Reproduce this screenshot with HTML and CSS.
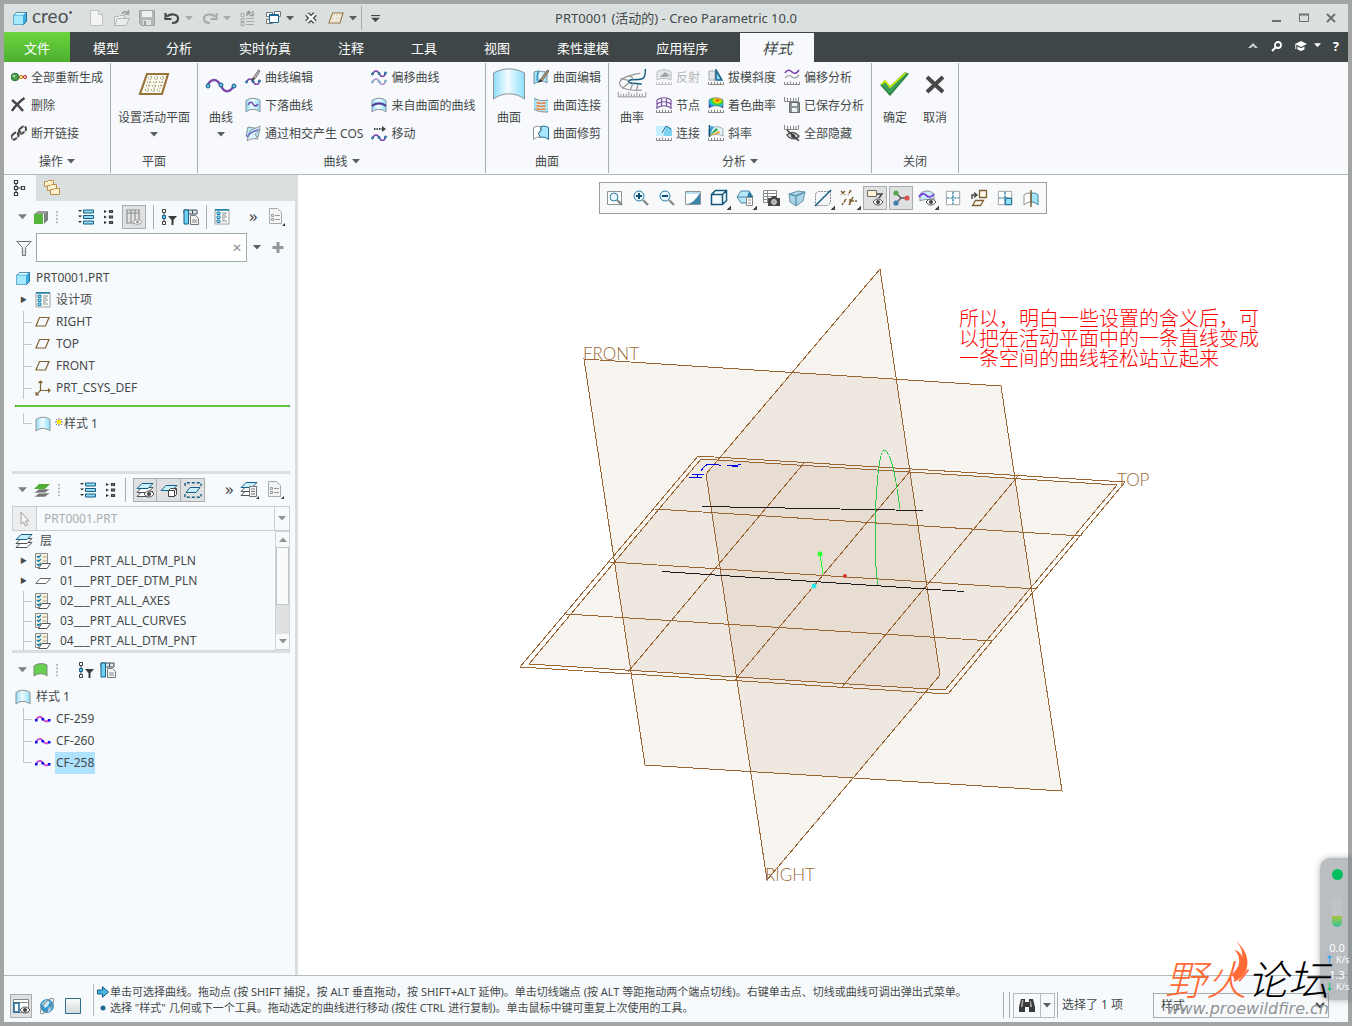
FILE: index.html
```html
<!DOCTYPE html>
<html lang="zh-CN">
<head>
  <meta charset="UTF-8">
  <title>PRT0001 (活动的) - Creo Parametric 10.0</title>
  <meta name="viewport" content="width=device-width, initial-scale=1.0">
  <link rel="stylesheet" href="styles.css">
</head>
<body>
  <!-- icon sprite -->
  <svg class="sprite" aria-hidden="true">
    <defs>
      <linearGradient id="gBlue"><stop offset="0" stop-color="#8fdcf8"/><stop offset=".45" stop-color="#f2fcff"/><stop offset="1" stop-color="#8fe0fb"/></linearGradient>
      <radialGradient id="gHue" cx=".6" cy=".25" r=".8"><stop offset="0" stop-color="#e02020"/><stop offset=".25" stop-color="#ffd800"/><stop offset=".5" stop-color="#2ed52e"/><stop offset=".7" stop-color="#18c8ff"/><stop offset="1" stop-color="#2a30e0"/></radialGradient>
      <linearGradient id="gGray" y2="1" x2="0"><stop offset="0" stop-color="#fdfdfd"/><stop offset="1" stop-color="#d3d8db"/></linearGradient>
      <path id="ruler" d="M.5 13v2.500h15V13M3.500 13v2M6.500 12.500v2.500M9.500 13v2M12.500 13v2" fill="none" stroke="#8a8a8a"/>
    </defs>
    <symbol id="caret" viewBox="0 0 8 5"><path d="M0 0h8L4 4.500z" fill="currentColor"/></symbol>
    <symbol id="cube" viewBox="0 0 16 16"><path d="M1.500 5.500l3-3h10v9l-3 3h-10z" fill="#37aede" stroke="#27719c"/><path d="M1.500 5.500h9.500v9H1.500z" fill="#a6e9ff"/><path d="M2.500 4.800l2-2h9l-2 2z" fill="#dff7ff"/></symbol>
    <symbol id="newdoc" viewBox="0 0 16 16"><path d="M1.500.5h8l4 4v11h-12z" fill="#f4f4f4" stroke="#c0c2c2"/><path d="M9.500.5v4h4" fill="none" stroke="#c0c2c2"/></symbol>
    <symbol id="open" viewBox="0 0 16 16"><path d="M.5 15V6.500h4l1-1h5v3M.500 15.500l3-7h12l-4 7z" fill="#eceeee" stroke="#b4b6b6"/><path d="M8 4c1-3 4-2.500 6-1.500M14.500 0v4h-4" fill="none" stroke="#9a9c9c" stroke-width="1.500"/></symbol>
    <symbol id="save" viewBox="0 0 16 16"><path d="M.5.5h15v15h-13l-2-2z" fill="#b5b8b8" stroke="#a0a3a3"/><path d="M3 1h10v6H3z" fill="#f0f1f1"/><path d="M4 10h8v5H4z" fill="#dfe1e1"/><path d="M5 11h2v4H5z" fill="#9b9e9e"/></symbol>
    <symbol id="undo" viewBox="0 0 16 16"><path d="M3 6.500C7 3 14 4 14 8.500S9 13 8 13M1.500 3v6h6" fill="none" stroke="currentColor" stroke-width="2.200"/></symbol>
    <symbol id="regen" viewBox="0 0 16 16"><path d="M1 3.500h3v3H1zM1 8.500h3v3H1zM1 12.500h3v3H1zM6 8.500h8M6 11.500h8M6 14.500h8" fill="none" stroke="#a4a8a8"/><path d="M7 6V2.500h3M13 1v4.500H9.500M8 .8l2.500 1.700L8 4.500" fill="none" stroke="#999c9c" stroke-width="1.400"/></symbol>
    <symbol id="windows" viewBox="0 0 16 16"><path d="M1.500 2.500h6v4h-6zM1.500 9.500h6v4h-6zM9.500 1.500h6v5h-6z" fill="#fff" stroke="#777"/><path d="M4.500 4.500h9v8h-9z" fill="#fff" stroke="#1c6a95"/><path d="M4 4h10v2H4z" fill="#1c6a95"/></symbol>
    <symbol id="closewin" viewBox="0 0 16 16"><path d="M4 4l8 8M12 4l-8 8" stroke="#4a4a4a" stroke-width="5"/><path d="M4 4l8 8M12 4l-8 8" stroke="#fff" stroke-width="2.400"/></symbol>
    <symbol id="plane" viewBox="0 0 32 24"><path d="M9 2h21l-6 20H2z" fill="#fdfaf0" stroke="#98733a" stroke-width="2.200"/><path d="M10 6h16M9 10h16M8 14h16M7 18h15" stroke="#7a6a3e" stroke-dasharray="1 2"/><path d="M13 4L9 20M19 4l-4 16M25 4l-4 16" stroke="#7a6a3e" stroke-dasharray="1 2"/></symbol>
    <symbol id="eq" viewBox="0 0 10 8"><path d="M0 .5h10" stroke="#444" stroke-width="1.500"/><path d="M0 3h10L5 8z" fill="#444"/></symbol>

    <symbol id="regenall" viewBox="0 0 16 16"><circle cx="4" cy="8" r="3.800" fill="#4f9e50" stroke="#2b6c33"/><circle cx="3" cy="7" r="1.300" fill="#a9dca6"/><circle cx="10" cy="8" r="1.700" fill="#ffe28a" stroke="#b8862f"/><circle cx="14" cy="8" r="1.600" fill="#ffd0d0" stroke="#c03030"/></symbol>
    <symbol id="del" viewBox="0 0 16 16"><path d="M1 3c4 3 8 7 11 11M13.500 1C8 5 4 9 1 14" fill="none" stroke="#454545" stroke-width="2.400"/></symbol>
    <symbol id="unlink" viewBox="0 0 16 16"><rect x="0" y="8.500" width="8" height="5" rx="2.500" transform="rotate(-45 4 11)" fill="none" stroke="#4d4d4d" stroke-width="2" stroke-dasharray="5 1"/><rect x="7.500" y="2.500" width="8" height="5" rx="2.500" transform="rotate(-45 11.500 5)" fill="none" stroke="#4d4d4d" stroke-width="2" stroke-dasharray="5 1"/><path d="M6 10l4-4" stroke="#4d4d4d" stroke-width="1.400"/></symbol>
    <symbol id="curvebig" viewBox="0 0 32 32"><path d="M2 18c4-8 10-8 14 0s10 6 13-1" fill="none" stroke="#7a4bab" stroke-width="2.400"/><g fill="#5cc6ee" stroke="#175f84"><circle cx="3" cy="18" r="2"/><circle cx="16" cy="17" r="2"/><circle cx="29" cy="18" r="2"/></g></symbol>
    <symbol id="wave" viewBox="0 0 16 8"><path d="M1.500 5c2-4 5-4 7 0s5 3 6-1" fill="none" stroke="#7b45b0" stroke-width="1.600"/><g fill="#5cc6ee" stroke="#175f84"><circle cx="1.500" cy="5" r="1"/><circle cx="8" cy="4.500" r="1"/><circle cx="14.500" cy="4" r="1"/></g></symbol>
    <symbol id="cedit" viewBox="0 0 16 16"><use href="#wave" y="8" width="16" height="8"/><path d="M8 9l5.500-8 1.500 1-5 8z" fill="#c9c2b8" stroke="#555" stroke-width=".8"/><path d="M6 12l2-3.500 2 1.500z" fill="#333"/></symbol>
    <symbol id="surf" viewBox="0 0 16 16"><path d="M1 3.500C5 .5 11 .5 15 3.500V15c-4-3.500-10-3.500-14 0z" fill="url(#gBlue)" stroke="#8b9296"/></symbol>
    <symbol id="cdrop" viewBox="0 0 16 16"><use href="#surf"/><path d="M3 8c2-4 4-3 5-1s3 3 5 0" fill="none" stroke="#6f45a8" stroke-width="1.600"/></symbol>
    <symbol id="cos" viewBox="0 0 16 16"><path d="M3 2l12 2-2 8-12-1z" fill="#bdeafb" stroke="#7d8f98"/><path d="M5 6c4-3 7-3 10-5-1 5-3 7-5 8l3 5c-4-1-8 0-11 2z" fill="#d8f2fd" stroke="#8b9296"/><path d="M2 12c3-5 7-6 11-7" fill="none" stroke="#6f6ac8" stroke-width="1.500"/></symbol>
    <symbol id="coff" viewBox="0 0 16 16"><use href="#wave" width="16" height="8"/><g opacity=".55"><use href="#wave" y="8" width="16" height="8"/></g></symbol>
    <symbol id="cfrom" viewBox="0 0 16 16"><use href="#surf"/><path d="M1 9c4-3.500 10-3.500 14 0" fill="none" stroke="#4c3a94" stroke-width="2.200"/></symbol>
    <symbol id="cmove" viewBox="0 0 16 16"><use href="#wave" y="8" width="16" height="8"/><path d="M3 4h9" stroke="#444" stroke-width="2" stroke-dasharray="1.500 1"/><path d="M11 1l4 3-4 3z" fill="#444"/></symbol>
    <symbol id="surfbig" viewBox="0 0 32 32"><path d="M.5 5C10-.5 22-.5 31.500 5v26C22 24 10 24 .5 31z" fill="url(#gBlue)" stroke="#8b9296"/></symbol>
    <symbol id="sedit" viewBox="0 0 16 16"><path d="M1 3c5-2 8 0 13 0v11c-4-3-9-2-13 1z" fill="url(#gBlue)" stroke="#7b929c"/><path d="M6 2C4 5 4 9 5 13" fill="none" stroke="#3d9dcc" stroke-width="2"/><path d="M7 11l7.500-10L16 2 9 12z" fill="#c99f72" stroke="#4a4a4a" stroke-width=".8"/><path d="M5 14l2-4 2.500 2z" fill="#333"/></symbol>
    <symbol id="sconn" viewBox="0 0 16 16"><path d="M1 1c4 3 9 3 14 2v12c-5 0-10 1-14-3z" fill="url(#gBlue)"/><path d="M1 1c4 3 9 3 14 2M1 12c4 3 9 3 14 3" fill="none" stroke="#7d8489"/><path d="M3.500 5.500l4 1 5-.500M3.500 8.500l4 1 5-.500M3.500 11.500l4 1 5-.500" fill="none" stroke="#ee7625" stroke-width="1.400"/><path d="M8 3v11" stroke="#a3bfca" stroke-width="1"/></symbol>
    <symbol id="strim" viewBox="0 0 16 16"><path d="M.5 2.500c4-2 5-1 7-1v4l-2 3 2 4c-3-1-5 0-7 2z" fill="#fff" stroke="#8b9296"/><path d="M8 1.500c3-1 5 0 7.500 1v12c-2-2-5-3-8-2l-2-4 2.500-3z" fill="#a9e6fb" stroke="#23708f"/></symbol>
    <symbol id="curvature" viewBox="0 0 32 36"><path d="M31 1c0 9-1 12-8 12-7 0-10 0-11 2 0 3 6 2 15 3" fill="none" stroke="#145a80" stroke-width="1.600"/><path d="M25 6C16 7 2 11 2 17c0 6 10 9 25 8M12 14L3 12M13 16L5 23M17 17l-3 8M23 18l-2 7M17 13l-2-5" fill="none" stroke="#999" stroke-width="1.400"/><path d="M.5 27v5.500h31V27M3.500 29v3M6.500 29v3M9.500 29v3M12.500 27v5M15.500 29v3M18.500 29v3M21.500 27v5M24.500 29v3M27.500 29v3" fill="none" stroke="#8a8a8a"/></symbol>
    <symbol id="reflect" viewBox="0 0 16 16"><path d="M1 3c4-3 10-3 14 0v8c-4-2-10-2-14 0z" fill="#e4e6e7" stroke="#b9bcbd"/><path d="M4 8l5-5 5 4-6 1z" fill="#9ea1a3"/><use href="#ruler" opacity=".5"/></symbol>
    <symbol id="knot" viewBox="0 0 16 16"><path d="M1 3c4-3 10-3 14 0M1 7c4-3 10-3 14 0M1 11c4-3 10-3 14 0M1 3v9M15 3v9M5.500 1v9M10.500 1v9" fill="none" stroke="#7b4fa0" stroke-width="1.200"/><use href="#ruler"/></symbol>
    <symbol id="conn" viewBox="0 0 16 16"><path d="M0 1h10L7 9l-1 2H0z" fill="#c5effc"/><path d="M10 1l6 3v7H7z" fill="#7ed1f0"/><path d="M10 1L6 8M10 1l5 3" fill="none" stroke="#266f94"/><use href="#ruler"/></symbol>
    <symbol id="draft" viewBox="0 0 16 16"><path d="M1 2h6v9H1z" fill="#e4e7e8" stroke="#a6aaac"/><path d="M8 1l6 10H8z" fill="#8bd8f4" stroke="#176188" stroke-width="1.500"/><use href="#ruler"/></symbol>
    <symbol id="shade" viewBox="0 0 16 16"><path d="M1 3c4-3 10-3 14 0v8c-4-3-10-3-14 0z" fill="url(#gHue)" stroke="#555" stroke-width=".6"/><use href="#ruler"/></symbol>
    <symbol id="slope" viewBox="0 0 16 16"><path d="M1 4c5-3 10-3 14 0v7c-4-2-9-2-14 0z" fill="#e0f3fa" stroke="#a6aaac"/><path d="M1 11L3 1l3 1z" fill="#37a0d8"/><path d="M1 11l7-8 2 2z" fill="#2ba84a"/><path d="M1 11l10-5 1 2z" fill="#e8a020"/><path d="M1.500 0v12" fill="none" stroke="#145a80" stroke-width="1.600"/><use href="#ruler"/></symbol>
    <symbol id="offana" viewBox="0 0 16 16"><path d="M1 4c3-5 6-2 7-1s4 3 7-2" fill="none" stroke="#7b45b0" stroke-width="1.600"/><path d="M1 9c3-4 6-2 7-1s4 2 7-2" fill="none" stroke="#a0a3a5" stroke-width="1.300"/><use href="#ruler"/></symbol>
    <symbol id="saved" viewBox="0 0 16 16"><path d="M.5 0v4.500h14V0M3.500 1v3M6.500 1v3M9.500 1v3M12 1v3" fill="none" stroke="#888"/><path d="M5.500 5.500h10v10h-10z" fill="#8e9396" stroke="#66696b"/><path d="M8 6h5v3H8zM8 11h5v4H8z" fill="#e9f2f5"/></symbol>
    <symbol id="hideall" viewBox="0 0 16 16"><path d="M.5 0v4.500h14V0M3.500 1v3M6.500 1v3M9.500 1v3M12 1v3" fill="none" stroke="#888"/><path d="M3 10c3-4 9-3 12 1-3 4-9 4-12-1z" fill="#cfcfcf" stroke="#555" stroke-width="1.400"/><circle cx="9" cy="11" r="2" fill="#444"/><path d="M3 5l12 11" stroke="#333" stroke-width="1.400"/></symbol>
    <symbol id="ok" viewBox="0 0 32 32"><path d="M2 17l4-4 5 6L26 5l3 1-18 21z" fill="#3aa05c" stroke="#2b7d3a" stroke-width="1.200"/><path d="M2.500 16.500L6 13l5 6L26.500 5" fill="none" stroke="#d2f000" stroke-width="1.600"/></symbol>
    <symbol id="cancel" viewBox="0 0 32 32"><path d="M8 9l16 15M24 9L8 24" stroke="#484848" stroke-width="4"/></symbol>

    <symbol id="treeicon" viewBox="0 0 16 16"><path d="M2.500.5h3v3h-3zM2.500 6.500h3v3h-3zM2.500 12.500h3v3h-3zM9.500 6.500h3v3h-3zM4 4v2M4 10v2M6 8h3" fill="#fff" stroke="#3c3c3c" stroke-width="1.200"/></symbol>
    <symbol id="folders" viewBox="0 0 16 16"><g fill="#fdf0d0" stroke="#c09048"><path d="M.5 1.500h3l1-1h5v6h-9z"/><path d="M3.500 5.500h3l1-1h5v6h-9z"/><path d="M6.500 9.500h3l1-1h5v6h-9z"/></g></symbol>
    <symbol id="green" viewBox="0 0 16 16"><path d="M1 5h9v10H1z" fill="#57b53c"/><path d="M1 5l4-3h10l-4 3z" fill="#9a9c9c"/><path d="M11 5l4-3v9l-4 4z" fill="#7c7f7f"/></symbol>
    <symbol id="dots" viewBox="0 0 4 16"><path d="M2 1v15" stroke="#8d9090" stroke-width="1.400" stroke-dasharray="2 2"/></symbol>
    <symbol id="expand" viewBox="0 0 16 16"><path d="M0 1h4L2 3zM0 6.500h4l-2 2zM0 12h4l-2 2z" fill="#333"/><path d="M5.500 1h10v3h-10zM5.500 6.500h10v3h-10zM5.500 12h10v3h-10z" fill="#8fdaf5" stroke="#175f84"/></symbol>
    <symbol id="collapse" viewBox="0 0 16 16"><path d="M4 1l3 1.500L4 4zM4 6.500L7 8 4 9.500zM4 12l3 1.500L4 15z" fill="#333"/><path d="M9.500 1.500h3v2h-3zM9.500 7h3v2h-3zM9.500 12.500h3v2h-3z" fill="#777" stroke="#3c3c3c" stroke-width="1.200"/></symbol>
    <symbol id="colseye" viewBox="0 0 16 16"><path d="M1 1h12v13H1zM1 4h12M5 1v13M9 1v10" fill="#e4e5e6" stroke="#8b8e8f" stroke-width="1.200"/><ellipse cx="11.500" cy="13" rx="4" ry="2.300" fill="#fff" stroke="#999"/><circle cx="11.500" cy="13" r="1.300" fill="#888"/></symbol>
    <symbol id="treefilter" viewBox="0 0 16 16"><path d="M1.500.5h3v3h-3zM1.500 12.500h3v3h-3zM3 4v8" fill="#fff" stroke="#3c3c3c"/><path d="M1.500 6.500h3v3h-3z" fill="#5ac8ee" stroke="#175f84"/><path d="M7 7h9l-3.500 4v5h-2v-5z" fill="#3c3c3c"/></symbol>
    <symbol id="cols" viewBox="0 0 16 16"><path d="M1 1h13v4H1z" fill="#dfe3e5" stroke="#3c5560"/><path d="M1 1h4.500v14H1z" fill="#6fd0f2" stroke="#175f84"/><path d="M9.500 1v4" stroke="#3c5560"/><path d="M7.500 6.500h5l3 3v6h-8z" fill="#f5f5f5" stroke="#777"/><path d="M9 11h5M9 13h5" stroke="#888"/></symbol>
    <symbol id="items" viewBox="0 0 16 16"><path d="M1 1h14v14H1z" fill="#fff" stroke="#9a9d9e"/><path d="M1 .8h14" stroke="#1f83ab" stroke-width="1.600"/><path d="M3 3h3v2.500H3zM3 7h3v2.500H3zM3 11h3v2.500H3z" fill="#9fdcf2" stroke="#1f83ab"/><path d="M8 4h5M8 6h4M8 8h5M8 10h3M8 12h5" stroke="#8a8d8e"/></symbol>
    <symbol id="doc" viewBox="0 0 18 20"><path d="M1.500 1.500h8l4 4v11h-12z" fill="#f3f4f5" stroke="#a8abac"/><path d="M3.500 7.500h2v2h-2zM3.500 11.500h2v2h-2zM7 8.500h5M7 12.500h5" fill="none" stroke="#999"/><path d="M17 16v3h-3z" fill="#333"/></symbol>
    <symbol id="funnel" viewBox="0 0 16 16"><path d="M.8 1.500h14.400l-5.600 6v8H6.400v-8z" fill="url(#gGray)" stroke="#6e7172"/></symbol>
    <symbol id="planesm" viewBox="0 0 16 16"><path d="M4.500 3.500H14L10.500 12H1z" fill="none" stroke="#7e6232" stroke-width="1.200"/></symbol>
    <symbol id="csys" viewBox="0 0 16 16"><path d="M5.500 1v9.500H15M5.500 10.500L1 15M3.500 3l2-2 2 2M13 8.500l2 2-2 2M1 12v3h3" fill="none" stroke="#7e6232" stroke-width="1.200"/></symbol>
    <symbol id="star" viewBox="0 0 8 8"><path d="M4 0v8M0 4h8M1 1l6 6M7 1L1 7" stroke="#555" stroke-width=".8"/><path d="M2 2h4v4H2z" fill="#ffee00"/></symbol>
    <symbol id="layergreen" viewBox="0 0 18 16"><path d="M6 11h11l-5 4H1zM6 7h11l-5 4H1z" fill="#777" stroke="#fff" stroke-width=".5"/><path d="M6 2h11l-5 5H1z" fill="#4fae35"/></symbol>
    <symbol id="layers" viewBox="0 0 18 16"><g fill="#fff" stroke="#4d5254"><path d="M6 9.500h11l-5 5H1z"/><path d="M6 5.500h11l-5 5H1z"/></g><path d="M6 1.500h11l-5 5H1z" fill="#c8effc" stroke="#175f84"/></symbol>
    <symbol id="eye" viewBox="0 0 10 8"><path d="M0 4c3-4 7-4 10 0-3 4-7 4-10 0z" fill="#fff" stroke="#444"/><circle cx="5" cy="4" r="2" fill="#444"/></symbol>
    <symbol id="layereye" viewBox="0 0 18 16"><use href="#layers"/><use href="#eye" x="8" y="8" width="10" height="8"/></symbol>
    <symbol id="layercube" viewBox="0 0 18 16"><path d="M6 3.500h11l-5 5H1z" fill="#c8effc" stroke="#175f84"/><path d="M8.500 8.500l2-2h6v6l-2 2h-6zM8.500 8.500h6v6M14.500 8.500l2-2" fill="#fff" stroke="#444"/></symbol>
    <symbol id="layersel" viewBox="0 0 18 16"><path d="M1 4V.8h16V4M1 12v3.200h16V12" fill="none" stroke="#175f84" stroke-dasharray="3 2" stroke-width="1.400"/><path d="M6 5.500h10l-4 5H2z" fill="#c8effc" stroke="#175f84"/></symbol>
    <symbol id="layerdoc" viewBox="0 0 20 20"><g fill="#fff" stroke="#4d5254"><path d="M6 10.500h11l-5 5H1z"/><path d="M6 6.500h11l-5 5H1z"/></g><path d="M6 2.500h11l-5 5H1z" fill="#c8effc" stroke="#175f84"/><path d="M9.500 6.500h7v10h-7z" fill="#f4f4f4" stroke="#777"/><path d="M11 9h4M11 11.500h4M11 14h4" stroke="#777"/><path d="M19 16v3h-3z" fill="#333"/></symbol>
    <symbol id="layeritem" viewBox="0 0 16 16"><path d="M.5.5h12v14H.5z" fill="#fdf3dc" stroke="#8a8d8e"/><path d="M2 3l1.500 1.500L6 2M2 7l1.500 1.500L6 6M2 11l1.500 1.500L6 10" fill="none" stroke="#0e7fb5" stroke-width="1.400"/><path d="M7.500 4h4M7.500 8h4" stroke="#999"/><path d="M7 10.500h8.500L12 15.500H3.500z" fill="#fff" stroke="#555"/></symbol>
    <symbol id="layerplane" viewBox="0 0 16 16"><path d="M5 5.500h10.500L11 10.500H.8z" fill="#fff" stroke="#666"/></symbol>
    <symbol id="cursor" viewBox="0 0 16 16"><path d="M4 1l8 9H8.500l2 4-2 1-2-4L4 13z" fill="#f4f4f4" stroke="#a0a3a4"/></symbol>
    <symbol id="surfgreen" viewBox="0 0 16 16"><path d="M1 4c4-3 9-3 13-1v11c-3-3-9-3-13 0z" fill="#66cf4d" stroke="#7c8a7c"/></symbol>
    <symbol id="cf" viewBox="0 0 16 16"><path d="M1 9c2-4 5-4 7-1s4 3 6 1" fill="none" stroke="#c84ad0" stroke-width="2"/><path d="M0 8h2.500v2.500H0zM6.500 7H9v2.500H6.500zM13 8h2.500v2.500H13z" fill="#0c0ce8"/></symbol>

    <symbol id="zoomfit" viewBox="0 0 18 18"><path d="M1.500 2.500h14v13h-14z" fill="#fff" stroke="#909394"/><circle cx="8" cy="8" r="4" fill="#e8f8ff" stroke="#2d7da0"/><path d="M11 11l5 5" stroke="#8a8d8e" stroke-width="2.400"/></symbol>
    <symbol id="zoomin" viewBox="0 0 18 18"><circle cx="7" cy="7" r="5" fill="#e8f8ff" stroke="#2d7da0"/><path d="M4 7h6M7 4v6" stroke="#134d70" stroke-width="2"/><path d="M11 11l5 5" stroke="#8a8d8e" stroke-width="2.400"/></symbol>
    <symbol id="zoomout" viewBox="0 0 18 18"><circle cx="7" cy="7" r="5" fill="#e8f8ff" stroke="#2d7da0"/><path d="M4 7h6" stroke="#134d70" stroke-width="2"/><path d="M11 11l5 5" stroke="#8a8d8e" stroke-width="2.400"/></symbol>
    <symbol id="repaint" viewBox="0 0 18 18"><path d="M1.500 2.500h15v13h-15z" fill="#fff" stroke="#909394"/><path d="M2 15c6 0 9-4 14-11v11z" fill="#3987ab"/><path d="M2 3h14v2H2z" fill="#b8dfee"/></symbol>
    <symbol id="style3d" viewBox="0 0 18 18"><path d="M1.500 5.500l4-4h11v10l-4 4h-11zM1.500 5.500h11v10M12.500 5.500l4-4" fill="#f6fdff" stroke="#15577c" stroke-width="1.500"/></symbol>
    <symbol id="orient" viewBox="0 0 18 18"><path d="M1 8l4-6h8l4 6-4 6H5zM1 8h16" fill="#b9e8f8" stroke="#4a88a4"/><path d="M13 2l4 6-1 4-5-3z" fill="#2a7ca2"/><path d="M10.500 8.500h6v8h-6zM12 11h3M12 14h3" fill="#fff" stroke="#888"/></symbol>
    <symbol id="camera" viewBox="0 0 18 18"><path d="M1.500 1.500h13v12h-13zM1.500 4.500h13M1.500 7.500h13M1.500 10.500h7M5.500 1.500v12" fill="#fff" stroke="#8a8d8e"/><path d="M6 9h3l1-2h4l1 2h3v8H6z" fill="#484848"/><circle cx="12" cy="13" r="2.400" fill="#aaa" stroke="#ddd"/></symbol>
    <symbol id="persp" viewBox="0 0 18 18"><path d="M1 5l9-3 7 1-2 9-7 5-6-4z" fill="#a8d5e7" stroke="#7295a5"/><path d="M1 5l7 2 9-4M8 7v10" fill="none" stroke="#5b94af" stroke-width="1.400"/></symbol>
    <symbol id="section" viewBox="0 0 18 18"><path d="M1.500 4.500l3-2h12v11l-3 3h-12z" fill="#f3f6f7" stroke="#8a8d8e" stroke-dasharray="2 1"/><path d="M1 17L17 1" stroke="#155c82" stroke-width="1.500"/></symbol>
    <symbol id="datum" viewBox="0 0 18 18"><path d="M1 2l4 4M5 2L1 6M11 1L8 6M6 10l-4 6M10 10v6M10 12h7M13 8l-4 8" stroke="#7e6232" stroke-width="1.500" stroke-dasharray="4 1"/></symbol>
    <symbol id="annot" viewBox="0 0 18 18"><path d="M1.500 1.500h9v6h-9z" fill="#fff6da" stroke="#6d6d6d"/><path d="M11 5h5l-3 4" fill="none" stroke="#444" stroke-width="1.400"/><use href="#eye" x="7" y="9" width="10" height="8"/></symbol>
    <symbol id="spin" viewBox="0 0 18 18"><path d="M4 4l5 5 6 0M9 9l-5 5" fill="none" stroke="#555" stroke-width="1.400"/><circle cx="4" cy="4" r="2.600" fill="#56a552"/><circle cx="15" cy="9" r="2.600" fill="#d85350"/><circle cx="4" cy="14" r="2.600" fill="#3781b0"/></symbol>
    <symbol id="styeye" viewBox="0 0 18 18"><path d="M2 5c4-4 10-4 14 0v7c-4-2-10-2-14 0z" fill="#c9eefb" stroke="#8b9296"/><path d="M1 8c4-6 7-2 8-1s4 2 7-2" fill="none" stroke="#7b45e0" stroke-width="1.800"/><use href="#eye" x="8" y="9" width="10" height="8"/></symbol>
    <symbol id="grid4" viewBox="0 0 18 18"><path d="M1.500 1.500h15v15h-15z" fill="#fff" stroke="#999"/><path d="M9 2v14M2 9h14" stroke="#1b7299" stroke-width="1.400" stroke-dasharray="3 1"/></symbol>
    <symbol id="rot" viewBox="0 0 18 18"><path d="M9.500 1.500h7v7h-7zM5.500 11.500h8l-3 5h-8z" fill="#fffaf0" stroke="#7e6232" stroke-width="1.300"/><path d="M2 10V6h4M4 3.500L7 6 4 8.500" fill="none" stroke="#444" stroke-width="1.400"/></symbol>
    <symbol id="grid1" viewBox="0 0 18 18"><path d="M1.500 1.500h15v15h-15z" fill="#fff" stroke="#999"/><path d="M9 2v14M2 9h14" stroke="#1b7299" stroke-width="1.400" stroke-dasharray="3 1"/><path d="M9.500 9.500h7v7h-7z" fill="#8fe0fb" stroke="#15577c"/></symbol>
    <symbol id="mirror" viewBox="0 0 18 18"><path d="M9 4c-3 0-5 0-7 2v10c2-2 4-3 7-3z" fill="#fff" stroke="#8b9296"/><path d="M9 4c3 0 5 0 7 2v10c-2-2-4-3-7-3z" fill="#a4e4fa" stroke="#3f86a5"/><path d="M9 1v17" stroke="#7e6232" stroke-width="1.500"/></symbol>

    <symbol id="navpane" viewBox="0 0 18 18"><path d="M1.500 2.500h15v13h-15zM1.500 5.500h15" fill="#fff" stroke="#888"/><path d="M2 6h5v9H2z" fill="#fff" stroke="#1c6a95" stroke-width="1.500"/><use href="#eye" x="8" y="9" width="10" height="8"/></symbol>
    <symbol id="globe" viewBox="0 0 18 18"><circle cx="9" cy="9" r="6.500" fill="#2e97cf" stroke="#5d9cc0"/><path d="M4 7l4-4 4 2-2 4-3 2zM10 11l4-2-2 5-2 1z" fill="#c6eaf9"/><ellipse cx="9" cy="9" rx="9.500" ry="3.500" transform="rotate(-50 9 9)" fill="none" stroke="#888"/></symbol>
    <symbol id="pane" viewBox="0 0 18 18"><path d="M1.500 1.500h15v15h-15z" fill="url(#gGray)" stroke="#2f6f92"/></symbol>
    <symbol id="bino" viewBox="0 0 18 18"><path d="M3 3h4v3h4V3h4l2 8v5h-6v-5H7v5H1v-5z" fill="#3a3a3a"/><path d="M4 4h1.500l-1 7H3zM12 5h1l1 6h-2z" fill="#aaa"/></symbol>
  </svg>

  <div class="window">
    <header class="titlebar">
      <div class="quick">
        <svg class="i"><use href="#cube"/></svg>
        <span class="brand">creo<sup>•</sup></span>
        <button aria-label="新建"><svg class="i"><use href="#newdoc"/></svg></button>
        <button aria-label="打开"><svg class="i"><use href="#open"/></svg></button>
        <button aria-label="保存"><svg class="i"><use href="#save"/></svg></button>
        <button class="with-caret" aria-label="撤销"><svg class="i"><use href="#undo"/></svg><svg class="caret dim"><use href="#caret"/></svg></button>
        <button class="with-caret dim" aria-label="重做"><svg class="i flip"><use href="#undo"/></svg><svg class="caret"><use href="#caret"/></svg></button>
        <button aria-label="重新生成"><svg class="i"><use href="#regen"/></svg></button>
        <button class="with-caret" aria-label="窗口"><svg class="i"><use href="#windows"/></svg><svg class="caret"><use href="#caret"/></svg></button>
        <button aria-label="关闭"><svg class="i"><use href="#closewin"/></svg></button>
        <button class="with-caret" aria-label="平面"><svg class="i"><use href="#plane"/></svg><svg class="caret"><use href="#caret"/></svg></button>
        <span class="vsep"></span>
        <button aria-label="自定义"><svg class="eq"><use href="#eq"/></svg></button>
      </div>
      <h1 class="title">PRT0001 (活动的) - Creo Parametric 10.0</h1>
      <div class="winbtns">
        <button aria-label="最小化"><svg viewBox="0 0 12 12"><path d="M1 9h9" stroke="#6b7070" stroke-width="2"/></svg></button>
        <button aria-label="最大化"><svg viewBox="0 0 12 12"><path d="M1.500 2.500h9v7h-9z" fill="none" stroke="#6b7070"/><path d="M1 2.500h10" stroke="#6b7070" stroke-width="2"/></svg></button>
        <button aria-label="关闭窗口"><svg viewBox="0 0 12 12"><path d="M2 2l8 8M10 2l-8 8" stroke="#6b7070" stroke-width="2"/></svg></button>
      </div>
    </header>

    <nav class="tabs">
      <button class="tab file">文件</button>
      <button class="tab">模型</button>
      <button class="tab">分析</button>
      <button class="tab">实时仿真</button>
      <button class="tab">注释</button>
      <button class="tab">工具</button>
      <button class="tab">视图</button>
      <button class="tab">柔性建模</button>
      <button class="tab">应用程序</button>
      <button class="tab active">样式</button>
      <div class="tabtools">
        <button aria-label="折叠功能区"><svg viewBox="0 0 12 12"><path d="M1 8l5-5 5 5H8L6 6 4 8z" fill="#c9cfcf"/></svg></button>
        <button aria-label="搜索"><svg viewBox="0 0 12 12"><circle cx="7" cy="5" r="3" fill="none" stroke="#fff" stroke-width="1.800"/><path d="M5 7l-4 4" stroke="#fff" stroke-width="2"/></svg></button>
        <button class="learn" aria-label="学习"><svg viewBox="0 0 12 12"><path d="M6 1l6 3-6 3-6-3z" fill="#fff"/><path d="M2.500 6.500L6 8.300l3.500-1.800v3L6 11 2.500 9.500z" fill="#fff"/><path d="M.8 4v5" stroke="#fff"/></svg><svg class="caret"><use href="#caret"/></svg></button>
        <button class="help" aria-label="帮助">?</button>
      </div>
    </nav>

    <section class="ribbon">
      <div class="group">
        <div class="tools">
          <div class="col">
            <button class="cmd"><svg class="i"><use href="#regenall"/></svg>全部重新生成</button>
            <button class="cmd"><svg class="i"><use href="#del"/></svg>删除</button>
            <button class="cmd"><svg class="i"><use href="#unlink"/></svg>断开链接</button>
          </div>
        </div>
        <div class="label">操作<svg class="caret"><use href="#caret"/></svg></div>
      </div>
      <div class="group">
        <div class="tools">
          <button class="big"><svg><use href="#plane"/></svg>设置活动平面<svg class="caret"><use href="#caret"/></svg></button>
        </div>
        <div class="label">平面</div>
      </div>
      <div class="group">
        <div class="tools">
          <button class="big"><svg><use href="#curvebig"/></svg>曲线<svg class="caret"><use href="#caret"/></svg></button>
          <div class="col">
            <button class="cmd"><svg class="i"><use href="#cedit"/></svg>曲线编辑</button>
            <button class="cmd"><svg class="i"><use href="#cdrop"/></svg>下落曲线</button>
            <button class="cmd"><svg class="i"><use href="#cos"/></svg>通过相交产生 COS</button>
          </div>
          <div class="col">
            <button class="cmd"><svg class="i"><use href="#coff"/></svg>偏移曲线</button>
            <button class="cmd"><svg class="i"><use href="#cfrom"/></svg>来自曲面的曲线</button>
            <button class="cmd"><svg class="i"><use href="#cmove"/></svg>移动</button>
          </div>
        </div>
        <div class="label">曲线<svg class="caret"><use href="#caret"/></svg></div>
      </div>
      <div class="group">
        <div class="tools">
          <button class="big"><svg><use href="#surfbig"/></svg>曲面</button>
          <div class="col">
            <button class="cmd"><svg class="i"><use href="#sedit"/></svg>曲面编辑</button>
            <button class="cmd"><svg class="i"><use href="#sconn"/></svg>曲面连接</button>
            <button class="cmd"><svg class="i"><use href="#strim"/></svg>曲面修剪</button>
          </div>
        </div>
        <div class="label">曲面</div>
      </div>
      <div class="group">
        <div class="tools">
          <button class="big"><svg><use href="#curvature"/></svg>曲率</button>
          <div class="col">
            <button class="cmd" disabled><svg class="i"><use href="#reflect"/></svg>反射</button>
            <button class="cmd"><svg class="i"><use href="#knot"/></svg>节点</button>
            <button class="cmd"><svg class="i"><use href="#conn"/></svg>连接</button>
          </div>
          <div class="col">
            <button class="cmd"><svg class="i"><use href="#draft"/></svg>拔模斜度</button>
            <button class="cmd"><svg class="i"><use href="#shade"/></svg>着色曲率</button>
            <button class="cmd"><svg class="i"><use href="#slope"/></svg>斜率</button>
          </div>
          <div class="col">
            <button class="cmd"><svg class="i"><use href="#offana"/></svg>偏移分析</button>
            <button class="cmd"><svg class="i"><use href="#saved"/></svg>已保存分析</button>
            <button class="cmd"><svg class="i"><use href="#hideall"/></svg>全部隐藏</button>
          </div>
        </div>
        <div class="label">分析<svg class="caret"><use href="#caret"/></svg></div>
      </div>
      <div class="group">
        <div class="tools">
          <button class="big"><svg><use href="#ok"/></svg>确定</button>
          <button class="big"><svg><use href="#cancel"/></svg>取消</button>
        </div>
        <div class="label">关闭</div>
      </div>
    </section>

    <main class="main">
      <aside class="side">
        <div class="sidetabs">
          <button class="on" aria-label="模型树"><svg class="i"><use href="#treeicon"/></svg></button>
          <button aria-label="文件夹浏览器"><svg class="i"><use href="#folders"/></svg></button>
        </div>

        <section class="pane model">
          <div class="bar">
            <svg class="tri"><use href="#caret"/></svg>
            <svg class="i"><use href="#green"/></svg>
            <svg class="dots"><use href="#dots"/></svg>
            <span class="push"></span>
            <button aria-label="全部展开"><svg class="i"><use href="#expand"/></svg></button>
            <button aria-label="全部折叠"><svg class="i"><use href="#collapse"/></svg></button>
            <button class="pressed" aria-label="显示列"><svg class="i"><use href="#colseye"/></svg></button>
            <span class="vsep"></span>
            <button aria-label="树过滤器"><svg class="i"><use href="#treefilter"/></svg></button>
            <button aria-label="树列"><svg class="i"><use href="#cols"/></svg></button>
            <span class="vsep"></span>
            <button aria-label="设计项"><svg class="i"><use href="#items"/></svg></button>
            <span class="more">»</span>
            <button aria-label="设置"><svg class="i20"><use href="#doc"/></svg></button>
          </div>
          <div class="filter">
            <svg class="i"><use href="#funnel"/></svg>
            <label class="box"><input type="text" aria-label="过滤"><span>✕</span></label>
            <svg class="caret"><use href="#caret"/></svg>
            <svg class="i plus" viewBox="0 0 16 16"><path d="M8 2v11M2.500 7.500h11" stroke="#919697" stroke-width="3"/></svg>
          </div>
          <ul class="tree">
            <li class="root"><svg class="i"><use href="#cube"/></svg>PRT0001.PRT</li>
            <li><span class="branch arrow">▶</span><svg class="i"><use href="#items"/></svg>设计项</li>
            <li><span class="branch"></span><svg class="i"><use href="#planesm"/></svg>RIGHT</li>
            <li><span class="branch"></span><svg class="i"><use href="#planesm"/></svg>TOP</li>
            <li><span class="branch"></span><svg class="i"><use href="#planesm"/></svg>FRONT</li>
            <li><span class="branch"></span><svg class="i"><use href="#csys"/></svg>PRT_CSYS_DEF</li>
          </ul>
          <div class="insert"></div>
          <ul class="tree">
            <li><span class="branch last"></span><svg class="i"><use href="#surf"/></svg><svg class="star"><use href="#star"/></svg>样式 1</li>
          </ul>
        </section>

        <section class="pane layer">
          <div class="bar">
            <svg class="tri"><use href="#caret"/></svg>
            <svg class="i18"><use href="#layergreen"/></svg>
            <svg class="dots"><use href="#dots"/></svg>
            <span class="push"></span>
            <button aria-label="全部展开"><svg class="i"><use href="#expand"/></svg></button>
            <button aria-label="全部折叠"><svg class="i"><use href="#collapse"/></svg></button>
            <span class="vsep"></span>
            <span class="joined">
              <button class="pressed" aria-label="显示层"><svg class="i18"><use href="#layereye"/></svg></button>
              <button class="pressed" aria-label="层对象"><svg class="i18"><use href="#layercube"/></svg></button>
              <button class="pressed" aria-label="选定层"><svg class="i18"><use href="#layersel"/></svg></button>
            </span>
            <span class="more">»</span>
            <button aria-label="层操作"><svg class="i20"><use href="#layerdoc"/></svg></button>
            <button aria-label="设置"><svg class="i20"><use href="#doc"/></svg></button>
          </div>
          <div class="combo">
            <button disabled aria-label="选择"><svg class="i"><use href="#cursor"/></svg></button>
            <select disabled aria-label="活动模型"><option>PRT0001.PRT</option></select>
            <span class="drop"><svg class="caret"><use href="#caret"/></svg></span>
          </div>
          <div class="scroll">
            <ul class="tree tight">
              <li class="root"><svg class="i18"><use href="#layers"/></svg>层</li>
              <li><span class="branch arrow">▶</span><svg class="i"><use href="#layeritem"/></svg>01___PRT_ALL_DTM_PLN</li>
              <li><span class="branch arrow">▶</span><svg class="i"><use href="#layerplane"/></svg>01___PRT_DEF_DTM_PLN</li>
              <li><span class="branch"></span><svg class="i"><use href="#layeritem"/></svg>02___PRT_ALL_AXES</li>
              <li><span class="branch"></span><svg class="i"><use href="#layeritem"/></svg>03___PRT_ALL_CURVES</li>
              <li><span class="branch"></span><svg class="i"><use href="#layeritem"/></svg>04___PRT_ALL_DTM_PNT</li>
            </ul>
            <div class="scrollbar">
              <span class="end"><svg class="caret up"><use href="#caret"/></svg></span>
              <span class="thumb"></span>
              <span class="end"><svg class="caret"><use href="#caret"/></svg></span>
            </div>
          </div>
        </section>

        <section class="pane style">
          <div class="bar">
            <svg class="tri"><use href="#caret"/></svg>
            <svg class="i"><use href="#surfgreen"/></svg>
            <svg class="dots"><use href="#dots"/></svg>
            <span class="push"></span>
            <button aria-label="树过滤器"><svg class="i"><use href="#treefilter"/></svg></button>
            <button aria-label="树列"><svg class="i"><use href="#cols"/></svg></button>
          </div>
          <ul class="tree">
            <li class="root"><svg class="i"><use href="#surf"/></svg>样式 1</li>
            <li><span class="branch"></span><svg class="i"><use href="#cf"/></svg>CF-259</li>
            <li><span class="branch"></span><svg class="i"><use href="#cf"/></svg>CF-260</li>
            <li class="selected"><span class="branch last"></span><svg class="i"><use href="#cf"/></svg><span>CF-258</span></li>
          </ul>
        </section>
      </aside>

      <section class="view">
        <div class="viewbar">
          <button aria-label="重新调整"><svg class="i18"><use href="#zoomfit"/></svg></button>
          <button aria-label="放大"><svg class="i18"><use href="#zoomin"/></svg></button>
          <button aria-label="缩小"><svg class="i18"><use href="#zoomout"/></svg></button>
          <button aria-label="重画"><svg class="i18"><use href="#repaint"/></svg></button>
          <button class="menu" aria-label="显示样式"><svg class="i18"><use href="#style3d"/></svg></button>
          <button class="menu" aria-label="已保存方向"><svg class="i18"><use href="#orient"/></svg></button>
          <button aria-label="视图管理器"><svg class="i18"><use href="#camera"/></svg></button>
          <button aria-label="透视图"><svg class="i18"><use href="#persp"/></svg></button>
          <button class="menu" aria-label="截面"><svg class="i18"><use href="#section"/></svg></button>
          <button class="menu" aria-label="基准显示"><svg class="i18"><use href="#datum"/></svg></button>
          <button class="pressed" aria-label="注释显示"><svg class="i18"><use href="#annot"/></svg></button>
          <button class="pressed" aria-label="旋转中心"><svg class="i18"><use href="#spin"/></svg></button>
          <button class="menu" aria-label="样式显示"><svg class="i18"><use href="#styeye"/></svg></button>
          <button aria-label="所有视图"><svg class="i"><use href="#grid4"/></svg></button>
          <button aria-label="活动平面方向"><svg class="i18"><use href="#rot"/></svg></button>
          <button aria-label="下一个视图"><svg class="i"><use href="#grid1"/></svg></button>
          <button aria-label="镜像"><svg class="i18"><use href="#mirror"/></svg></button>
        </div>

        <svg class="scene" viewBox="298 175 1050 800">
          <g class="planes">
            <polygon points="584,359 1001,386 1062,791 645,765"/>
            <polygon points="880,269 706,474 767,880 940,675"/>
            <polygon points="701,459 1117,485 945,690 529,664"/>
            <polygon class="outline" points="698,456 1125,482 948,694 520,667"/>
            <path class="outline" d="M655 509l427 27M610 562l427 27M566 614l427 27M804 463L628 672M911 470L735 680M1018 476L842 687"/>
          </g>
          <path class="ink" d="M702 506.500L923 510.500M662 571.500L964 591.500"/>
          <path class="arc" d="M878 585C874 560 875 530 876 500 878 468 881 450 884 450 890 450 895 470 900 509"/>
          <path class="axis" d="M692 474.500h12M689 477.500h13M697 475v3M701 471q3-5 6-6.500h10l4 1M727 465.500h8l6-1M732 466.500h6"/>
          <path class="up" d="M820 554l3 20"/>
          <circle cx="820" cy="554" r="2.500" fill="#2cff2c"/>
          <circle cx="845" cy="576" r="2" fill="#d2382e"/>
          <circle cx="814" cy="586" r="2.500" fill="#2ce8f4"/>
          <g class="names">
            <text x="583" y="360">FRONT</text>
            <text x="1117" y="486">TOP</text>
            <text x="765" y="881">RIGHT</text>
          </g>
          <g class="note">
            <text x="959" y="326">所以，明白一些设置的含义后，可</text>
            <text x="959" y="346">以把在活动平面中的一条直线变成</text>
            <text x="959" y="366">一条空间的曲线轻松站立起来</text>
          </g>
        </svg>
      </section>
    </main>

    <footer class="status">
      <div class="toggles">
        <button class="pressed" aria-label="导航器"><svg class="i18"><use href="#navpane"/></svg></button>
        <button aria-label="浏览器"><svg class="i18"><use href="#globe"/></svg></button>
        <button aria-label="全屏"><svg class="i18"><use href="#pane"/></svg></button>
      </div>
      <div class="messages">
        <p><svg viewBox="0 0 12 12"><path d="M.5 4h5V.8L11.500 6l-6 5.200V8h-5z" fill="#49b8e8" stroke="#14557a"/></svg>单击可选择曲线。拖动点 (按 SHIFT 捕捉，按 ALT 垂直拖动，按 SHIFT+ALT 延伸)。单击切线端点 (按 ALT 等距拖动两个端点切线)。右键单击点、切线或曲线可调出弹出式菜单。</p>
        <p><svg viewBox="0 0 12 12"><circle cx="6" cy="6" r="2.500" fill="#1d6a93"/></svg>选择 "样式" 几何或下一个工具。拖动选定的曲线进行移动 (按住 CTRL 进行复制)。单击鼠标中键可重复上次使用的工具。</p>
      </div>
      <div class="pick">
        <span class="find"><button aria-label="查找"><svg class="i18"><use href="#bino"/></svg></button><button aria-label="查找选项"><svg class="caret"><use href="#caret"/></svg></button></span>
        <span class="count">选择了 1 项</span>
        <select aria-label="选择过滤器"><option>样式</option></select>
      </div>
    </footer>
  </div>

  <!-- network monitor widget -->
  <div class="monitor">
    <span class="lamp"></span>
    <span class="battery"></span>
    <div class="rate">0.0<small><b class="upload">↑</b> K/s</small></div>
    <div class="rate">1.3<small><b class="download">↓</b> K/s</small></div>
  </div>

  <!-- forum logo -->
  <div class="logo">
    <div class="mark"><span>野火</span>论坛</div>
    <div class="url">www.proewildfire.cn</div>
    <svg class="flame" viewBox="0 0 20 44"><path d="M7 1c9 8 13 17 11 26-1 6-5 11-13 15 1-4-1-6-3-7 6-5 9-10 8-16 0-3-2-7-5-9 5 1 8 4 8 8 1-6-1-11-6-17z" fill="#ff6a36"/></svg>
  </div>
</body>
</html>
```
FILE: styles.css
```css
* {
  box-sizing: border-box;
}
body {
  margin: 0;
  height: 100vh;
  padding: 4px;
  background: #a3a4a4;
  font-family: "Noto Sans", "Noto Sans CJK SC", sans-serif;
  font-size: 12px;
  color: #45494a;
  overflow: hidden;
}
button, select, input {
  font: inherit;
  color: inherit;
}
button {
  display: flex;
  flex: none;
  align-items: center;
  justify-content: center;
  padding: 0;
  border: none;
  background: none;
  white-space: nowrap;
}
ul, p, h1 {
  margin: 0;
  padding: 0;
  list-style: none;
}
svg {
  display: block;
  flex: none;
}
.sprite {
  position: absolute;
  width: 0;
  height: 0;
}
.i {
  width: 16px;
  height: 16px;
}
.i18 {
  width: 18px;
  height: 18px;
}
.i20 {
  width: 20px;
  height: 20px;
}
.caret {
  width: 8px;
  height: 5px;
  color: #5a5e5f;
}
.vsep {
  flex: none;
  width: 1px;
  height: 24px;
  background: #a9adae;
}
.pressed {
  background: #dfe0e2;
  border: 1px solid #a9adae;
}
.window {
  display: flex;
  flex-direction: column;
  height: 100%;
  background: #f7fafc;
}

/* title bar */
.titlebar {
  display: grid;
  grid-template-columns: 1fr auto 1fr;
  align-items: center;
  height: 28px;
  background: #dae0df;
}
.quick {
  display: flex;
  align-items: center;
  gap: 9px;
  padding-left: 8px;
}
.quick .with-caret {
  gap: 5px;
}
.quick .dim, .quick .dim .caret {
  color: #a7abab;
}
.quick .vsep {
  margin-left: -5px;
}
.flip {
  transform: scaleX(-1);
}
.brand {
  margin: -8px 8px 0 -5px;
  font-family: Lato, sans-serif;
  font-size: 19px;
  line-height: 20px;
  color: #4d5051;
}
.brand sup {
  font-size: 7px;
  vertical-align: 8px;
}
.eq {
  width: 9px;
  height: 7px;
}
.title {
  font-size: 13px;
  line-height: 18px;
  font-weight: normal;
}
.winbtns {
  display: flex;
  justify-content: flex-end;
  gap: 15px;
  padding-right: 11px;
}
.winbtns svg, .tabtools svg {
  width: 12px;
  height: 12px;
}

/* ribbon tabs */
.tabs {
  display: flex;
  gap: 1px;
  height: 30px;
  background: #3e4647;
}
.tab {
  padding: 0 23px;
  font-size: 13px;
  color: #fff;
}
.tab.file {
  margin-right: -1px;
  padding: 0 20px;
  background: linear-gradient(#6bd43c, #4caf31);
}
.tab.active {
  margin: 1px 0 0 8px;
  padding: 0 22px;
  background: #f7f9fc;
  color: #3e4647;
  font-size: 15px;
  font-style: italic;
}
.tabtools {
  display: flex;
  align-items: center;
  gap: 12px;
  margin-left: auto;
  padding: 0 9px 3px 0;
}
.tabtools .learn {
  gap: 7px;
}
.tabtools .caret {
  width: 7px;
  height: 5px;
  color: #fff;
}
.help {
  color: #fff;
  font-size: 13px;
  font-weight: bold;
}

/* ribbon */
.ribbon {
  display: grid;
  grid-template-columns: 107px 87px 288px 123px 263px 87px;
  height: 113px;
  background: #f7f9fc;
  border-bottom: 1px solid #b0bcbd;
}
.group {
  display: flex;
  flex-direction: column;
  justify-content: space-between;
  margin: 1px 0;
  border-right: 1px solid #a9adae;
}
.tools {
  display: flex;
  gap: 8px;
  padding-left: 7px;
}
.col {
  display: flex;
  flex-direction: column;
}
.cmd {
  height: 28px;
  gap: 4px;
  justify-content: flex-start;
}
.cmd:disabled {
  color: #b3b7b8;
}
.big {
  flex-direction: column;
  justify-content: flex-start;
  min-width: 32px;
  padding-top: 5px;
  line-height: 18px;
}
.big svg:first-child {
  width: 32px;
  height: 32px;
  margin-bottom: 9px;
}
.big .caret {
  margin-top: 5px;
}
.group:nth-child(2) .big svg:first-child {
  height: 24px;
  margin: 4px 0 13px;
}
.label {
  display: flex;
  align-items: center;
  justify-content: center;
  gap: 4px;
  height: 24px;
}

/* left side */
.main {
  display: flex;
  flex: 1;
  min-height: 0;
}
.side {
  display: flex;
  flex-direction: column;
  flex: none;
  width: 294px;
  border-right: 3px solid #d9dfdf;
}
.sidetabs {
  display: flex;
  height: 26px;
  background: #d9dfdf;
}
.sidetabs button {
  width: 32px;
}
.sidetabs .on {
  background: #f7fafc;
}
.pane {
  margin: 0 5px 0 8px;
}
.model {
  height: 273px;
  border-bottom: 3px solid #d9dfdf;
}
.layer {
  height: 179px;
  border-bottom: 3px solid #d9dfdf;
}
.bar {
  display: flex;
  align-items: center;
  gap: 6px;
  height: 32px;
  padding-left: 6px;
}
.bar .pressed {
  width: 24px;
  height: 24px;
}
.bar .vsep {
  margin: 0 1px;
}
.tri {
  width: 9px;
  height: 8px;
  color: #7b7f80;
}
.dots {
  width: 4px;
  height: 14px;
}
.push {
  width: 7px;
}
.joined {
  display: flex;
}
.joined .pressed + .pressed {
  border-left: none;
}
.more {
  margin: -3px 3px 0 13px;
  font-size: 17px;
}
.layer .more {
  margin: -3px 0 0 14px;
}
.style .bar {
  height: 33px;
}
.filter {
  display: flex;
  align-items: center;
  height: 29px;
  padding-left: 4px;
}
.box {
  display: flex;
  align-items: center;
  width: 211px;
  height: 29px;
  margin: 0 6px 0 4px;
  padding-right: 4px;
  border: 1px solid #9fabab;
  background: #fff;
  color: #8e9293;
}
.box input {
  flex: 1;
  min-width: 0;
  border: none;
  outline: none;
}
.plus {
  margin-left: 9px;
}
.tree {
  line-height: 22px;
}
.model .filter + .tree {
  margin-top: 5px;
}
.tree li {
  display: flex;
  align-items: center;
  height: 22px;
  padding-left: 11px;
  white-space: nowrap;
}
.tree .root {
  padding-left: 3px;
}
.tree .i, .tree .i18 {
  margin-right: 5px;
}
.tree .star {
  width: 8px;
  height: 8px;
  margin: -4px 1px 0 -1px;
}
.branch {
  width: 9px;
  height: 100%;
  margin-right: 3px;
  border-left: 1px solid #c3c7c8;
  background: linear-gradient(#c3c7c8, #c3c7c8) center / 100% 1px no-repeat;
}
.branch.last {
  height: 50%;
  align-self: flex-start;
  background-position: bottom;
}
.branch.arrow {
  width: 12px;
  margin-left: -3px;
  border: none;
  background: none;
  font-size: 7px;
}
.insert {
  height: 2px;
  margin: 6px 0 6px 3px;
  background: #62c445;
  border-left: 1px solid #3c9c2a;
  border-right: 1px solid #3c9c2a;
}
.tight {
  line-height: 20px;
}
.tight li {
  height: 20px;
}
.tight .i {
  margin-right: 9px;
}
.tight .i18 {
  margin-right: 7px;
}
.selected span:last-child {
  margin-left: -1px;
  padding: 0 1px;
  background: #aee2ff;
}
.combo {
  display: flex;
  height: 25px;
  border: 1px solid #c9cdce;
}
.combo button {
  width: 24px;
  background: #eceeef;
  border-right: 1px solid #c9cdce;
}
.combo select {
  flex: 1;
  appearance: none;
  padding: 0 7px;
  border: none;
  background: none;
  color: #a9adae;
  opacity: 1;
}
.drop {
  display: flex;
  align-items: center;
  justify-content: center;
  width: 15px;
  border-left: 1px solid #c9cdce;
}
.drop .caret, .scrollbar .caret {
  color: #8e9293;
}
.scroll {
  display: flex;
  justify-content: space-between;
  height: 119px;
  overflow: hidden;
}
.scrollbar {
  display: flex;
  flex-direction: column;
  width: 15px;
  background: #dfe0e2;
  border: 1px solid #d0d3d4;
}
.end {
  display: flex;
  align-items: center;
  justify-content: center;
  height: 15px;
  background: #f7f9fa;
}
.end:last-child {
  margin-top: auto;
}
.thumb {
  height: 58px;
  border: 1px solid #c3c6c7;
  background: #f9fafb;
}
.up {
  transform: rotate(180deg);
}

/* graphics area */
.view {
  position: relative;
  flex: 1;
  min-width: 0;
  background: #fff;
}
.viewbar {
  position: absolute;
  top: 7px;
  left: 0;
  right: 0;
  display: flex;
  gap: 2px;
  width: max-content;
  margin: 0 auto;
  padding: 3px;
  border: 1px solid #9a9d9e;
  background: #f7f9fb;
}
.viewbar button {
  width: 24px;
  height: 24px;
}
.menu {
  background: linear-gradient(135deg, transparent 50%, #444 50%) right bottom / 4px 4px no-repeat;
}
.scene {
  width: 100%;
  height: 100%;
}
.planes {
  fill: rgba(153, 102, 51, 0.08);
  stroke: #996633;
  shape-rendering: crispEdges;
}
.outline {
  fill: none;
}
.ink, .arc, .axis, .scene .up {
  fill: none;
  stroke: #1c1c1c;
  shape-rendering: crispEdges;
}
.scene .arc {
  stroke: #2cc84a;
}
.scene .axis {
  stroke: #0000e6;
}
.scene .up {
  stroke: #2cff2c;
  transform: none;
}
.names {
  font-family: Lato, sans-serif;
  font-weight: 300;
  font-size: 17px;
  fill: #996633;
}
.note {
  font-family: "Noto Sans CJK SC", sans-serif;
  font-weight: 300;
  font-size: 20px;
  fill: #ff0000;
}

/* status bar */
.status {
  display: flex;
  align-items: center;
  height: 47px;
  padding-right: 19px;
  border-top: 1px solid #b0bcbd;
  background: #f7fafc;
}
.toggles {
  display: flex;
  gap: 4px;
  padding: 14px 9px 0 6px;
}
.toggles button {
  width: 22px;
  height: 24px;
}
.messages {
  flex: 1;
  min-width: 0;
  margin-top: 2px;
  padding-left: 3px;
  border-left: 1px solid #b6babb;
  font-size: 11px;
}
.messages p {
  display: flex;
  align-items: center;
  gap: 1px;
  line-height: 16px;
  white-space: nowrap;
}
.messages svg {
  width: 12px;
  height: 12px;
}
.pick {
  display: flex;
  align-items: center;
  padding: 12px 0 0 3px;
}
.pick::before {
  content: "";
  width: 5px;
  height: 26px;
  margin-right: 3px;
  border: 1px solid #a9adae;
  border-width: 0 1px;
}
.find {
  display: flex;
  height: 25px;
  border: 1px solid #b6babb;
}
.find button {
  width: 26px;
}
.find button + button {
  width: 14px;
  border-left: 1px solid #b6babb;
}
.count {
  margin: 0 30px 0 2px;
  padding-left: 4px;
  border-left: 1px solid #a9adae;
  line-height: 26px;
}
.pick select {
  width: 176px;
  height: 25px;
  padding: 0 3px;
  border: 1px solid #a9adae;
  background: #f7f9fa;
}

/* floating widgets */
.monitor {
  position: absolute;
  right: 0;
  bottom: 26px;
  display: flex;
  flex-direction: column;
  align-items: center;
  width: 32px;
  height: 142px;
  padding: 11px 0 0 2px;
  border-radius: 10px 0 0 10px;
  background: rgba(130, 136, 142, 0.55);
  box-shadow: 0 0 6px rgba(0, 0, 0, 0.3);
  color: #fff;
}
.lamp {
  width: 11px;
  height: 11px;
  border-radius: 50%;
  background: #00bf63;
}
.battery {
  width: 10px;
  height: 30px;
  margin: 17px 0 14px;
  border-radius: 5px;
  background: linear-gradient(#bfc3c8 64%, #a5c83c 64%, #35c3a0);
}
.rate {
  font-size: 11px;
  line-height: 13px;
  text-align: center;
  margin-bottom: 3px;
}
.rate small {
  display: block;
  font-size: 9px;
  line-height: 11px;
  white-space: nowrap;
}
.upload {
  color: #18a0ff;
}
.download {
  color: #00bf63;
}
.logo {
  position: absolute;
  right: 23px;
  bottom: 8px;
  text-align: right;
}
.mark {
  font-family: "Noto Sans CJK SC", sans-serif;
  font-size: 41px;
  font-weight: 300;
  font-style: italic;
  line-height: 46px;
  color: #000;
}
.mark span {
  color: #ff6a36;
}
.url {
  font-family: "DejaVu Sans", sans-serif;
  font-style: italic;
  font-size: 16px;
  line-height: 18px;
  color: #8f9397;
}
.flame {
  position: absolute;
  left: 64px;
  top: -14px;
  width: 20px;
  height: 44px;
}
```
